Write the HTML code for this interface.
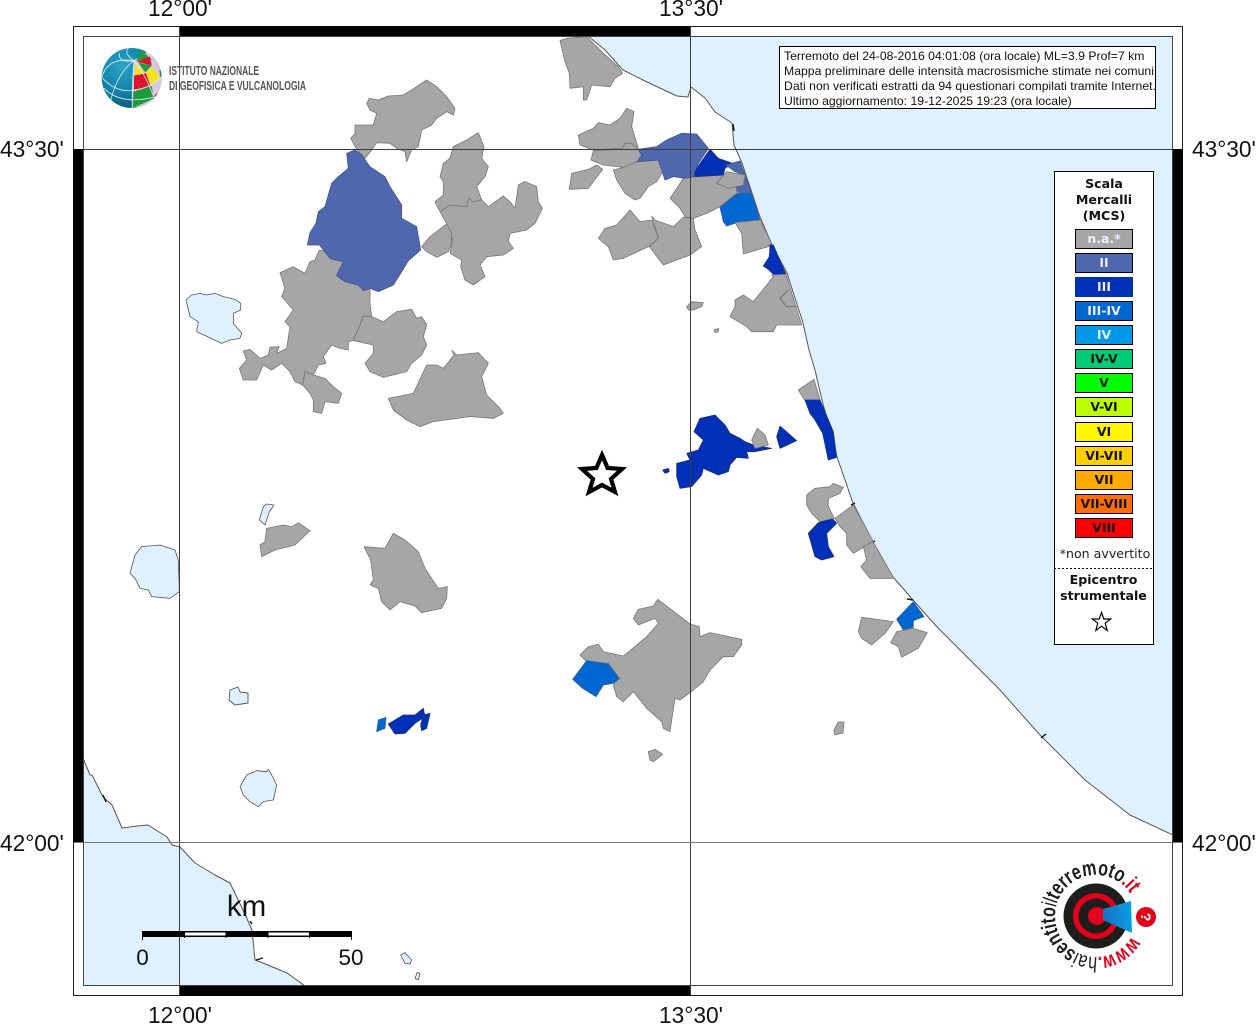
<!DOCTYPE html>
<html><head><meta charset="utf-8"><style>
html,body{margin:0;padding:0;background:#fff;width:1256px;height:1024px;overflow:hidden}
svg{display:block}
.g{filter:blur(.3px)}
.g polygon{fill:#a6a6a6;stroke:#777;stroke-width:2.4;stroke-linejoin:round}
.g polygon.b2{fill:#4f67ae;stroke:#44548a}
.g polygon.b3{fill:#0030b8;stroke:#20307a}
.g polygon.b34{fill:#0066d0;stroke:#335f9a}
.g polygon.l{fill:#dff1ff;stroke:#555}
.g polyline{fill:none;stroke:#666;stroke-width:2.4}
.lab{font-family:"Liberation Sans",sans-serif;font-size:22.7px;fill:#111}
.leg{font-family:"DejaVu Sans",sans-serif;font-size:12.6px;font-weight:bold;text-anchor:middle;fill:#111}
.sw{font-family:"DejaVu Sans",sans-serif;font-size:12.5px;font-weight:bold;text-anchor:middle;fill:#111}
.sw.w{fill:#eef}
.info{font-family:"Liberation Sans",sans-serif;font-size:12.24px;fill:#111}
</style></head><body>
<svg width="1256" height="1024" viewBox="0 0 1256 1024" xmlns="http://www.w3.org/2000/svg">
<defs>
<clipPath id="fr"><rect x="83" y="36" width="1090" height="950"/></clipPath>
<clipPath id="box"><rect x="780" y="47" width="375" height="61"/></clipPath>
<clipPath id="gl"><circle cx="215" cy="204" r="90"/></clipPath>
<radialGradient id="gt" cx=".35" cy=".3" r=".8"><stop offset="0" stop-color="#2aa4c8"/><stop offset=".6" stop-color="#0f7ca3"/><stop offset="1" stop-color="#07506c"/></radialGradient>
<linearGradient id="cone" x1="0" y1="0" x2="1" y2="0"><stop offset="0" stop-color="#1a70c0"/><stop offset="1" stop-color="#09a0e4"/></linearGradient>
<path id="arc" d="M1131.5 936.5 A41 41 0 1 1 1131.5 895.5"/>
</defs>
<rect width="1256" height="1024" fill="#fff"/>

<g clip-path="url(#fr)">
<polygon fill="#dff1ff" stroke="#555" stroke-width="1" stroke-linejoin="round" points="588,36 605,50 623,70 647,82 677,96 688,97 691,87 705,98 715,112 732,123 734,145 742,163 760,217 773,247 787,273 803,323 809,350 815,370 822,400 837,457 853,503 873,542 893,577 913,600 938,628 960,650 1000,690 1040,735 1085,780 1130,815 1173,835 1180,835 1180,30 588,30"/>
<polygon fill="#dff1ff" stroke="#555" stroke-width="1" stroke-linejoin="round" points="83,758 90,775 92,775 103,797 112,805 122,828 137,826 148,825 167,837 172,845 180,847 195,863 215,875 230,883 243,910 252,930 253,940 255,960 263,963 287,973 305,986 308,992 76,992 76,758"/>
<g stroke="#111" stroke-width="1.4" fill="none">
<line x1="733" y1="124" x2="734" y2="131"/>
<line x1="851" y1="505" x2="855" y2="503"/>
<line x1="871" y1="543" x2="875" y2="541"/>
<line x1="907" y1="599" x2="913" y2="600"/>
<line x1="1041" y1="738" x2="1046" y2="734"/>
<line x1="252" y1="924" x2="250" y2="921"/>
<line x1="256" y1="960" x2="263" y2="958"/>
<line x1="103" y1="795" x2="106" y2="802"/>
</g>
</g>

<!-- zoom5 group -->
<g class="g" transform="translate(230,70) scale(.33333)">
<polygon points="410,100 418,85 445,90 475,78 520,75 545,60 590,30 620,50 650,80 675,115 670,135 650,125 620,145 605,165 575,180 565,230 545,240 530,275 525,245 500,235 480,220 440,218 425,240 405,265 380,238 362,205 375,190 375,165 400,165 430,165 440,130 420,120"/>
<polygon points="268,540 295,545 305,568 340,575 320,617 345,635 385,645 400,662 420,655 420,700 425,740 400,738 390,765 370,812 355,815 355,840 330,835 305,825 280,860 288,880 265,885 250,915 225,905 218,945 195,935 180,905 155,880 125,900 100,885 80,930 40,930 28,895 50,870 40,843 60,838 90,865 115,855 120,832 148,830 140,850 170,835 180,770 165,755 190,720 155,680 165,655 150,608 190,590 225,610 240,575 255,570"/>
<polygon points="225,905 250,915 285,925 310,950 335,970 325,1000 285,995 275,1030 250,1025 250,990 240,970 218,945"/>
<polygon points="400,738 425,740 460,755 500,725 545,718 560,745 575,740 590,765 580,800 590,825 575,855 545,880 530,905 460,922 420,905 405,880 430,850 430,825 370,812 390,765"/>
<polygon points="475,985 550,970 590,885 620,885 640,895 672,855 665,840 680,855 745,848 775,880 755,920 770,975 810,1015 820,1030 790,1045 720,1040 610,1055 570,1070 530,1050 490,1020"/>
<polygon points="615,395 640,375 640,335 630,320 640,280 660,265 670,230 710,210 745,188 762,230 755,265 775,290 765,320 740,350 755,390 730,395 715,390 710,410 660,405 630,425"/>
<polygon points="630,425 660,405 710,410 715,385 730,395 755,390 775,410 820,378 840,395 855,415 865,345 885,335 920,350 925,395 937,415 915,460 890,480 840,490 835,515 850,535 820,555 770,560 750,585 765,620 730,645 705,630 692,590 695,570 660,550 668,510 650,460"/>
<polygon points="575,530 600,500 650,462 665,490 665,520 655,545 620,562 590,545"/>
<polygon class="b2" points="350,250 375,240 395,255 420,290 465,320 480,350 515,405 515,445 560,470 572,540 535,572 515,605 490,645 445,665 420,655 400,662 385,645 345,635 320,617 340,575 300,565 268,525 232,525 240,488 258,460 265,425 285,410 305,340 325,320 355,295"/>
</g>

<!-- zoom6 group -->
<g class="g" transform="translate(560,30) scale(.33333)">
<polygon points="0,32 20,25 80,20 105,45 130,70 175,110 188,130 165,145 150,170 95,165 80,210 70,210 70,170 30,175 28,130 15,95"/>
<polygon points="55,315 100,295 115,278 150,285 180,265 200,235 222,245 215,290 235,355 205,340 185,355 100,360 60,345"/>
<polygon points="100,362 185,358 195,340 215,340 235,360 245,375 232,395 190,412 130,405 93,390"/>
<polygon points="35,430 85,418 110,405 128,418 100,455 85,475 28,478"/>
<polygon points="160,420 190,412 232,395 295,390 308,425 290,455 265,470 240,505 225,510 195,490 170,450"/>
<polygon points="115,625 135,595 170,585 210,540 240,575 275,570 295,625 265,650 190,685 160,690 145,650"/>
<polygon points="275,558 285,570 340,590 370,562 400,565 405,600 415,625 425,650 390,675 310,705 268,650 295,625"/>
<polygon points="330,505 370,445 403,440 490,435 470,460 505,475 530,470 530,490 480,530 440,550 400,565 375,560 360,535"/>
<polygon class="b2" points="235,358 290,350 320,330 365,310 410,312 445,355 415,400 403,440 375,445 340,440 315,450 305,420 295,390 232,395 245,375"/>
<polygon class="b3" points="450,358 475,385 518,400 495,415 490,435 405,440 405,425 420,400"/>
<polygon class="b2" points="498,405 540,393 555,435 525,425"/>
<polygon class="b2" points="530,465 550,465 555,435 575,490 535,495"/>
<polygon points="470,460 500,425 555,435 550,465 505,475"/>
<polygon class="b34" points="480,532 530,492 575,490 600,570 540,575 500,588 490,575"/>
<polygon points="525,578 600,570 635,640 625,650 550,672 545,610"/>
<polygon class="b3" points="630,645 640,645 678,733 645,738 625,718 610,708 628,680"/>
<polygon points="635,735 678,733 725,885 650,885 640,905 575,905 560,890 510,860 525,830 525,810 550,795 580,815 640,740"/>
<polyline points="685,780 660,805 680,830 710,830"/>
<polygon points="380,830 395,815 430,818 425,830 400,840 385,840"/>
<polygon points="462,900 475,895 475,905 465,908"/>
</g>

<!-- zoom7 group -->
<g class="g" transform="translate(640,370) scale(.33333)">
<polygon points="475,60 522,28 540,90 495,92"/>
<polygon class="b3" points="495,90 540,90 580,185 590,262 565,270 548,190 525,150 510,130"/>
<polygon class="b3" points="162,185 180,145 225,135 255,165 270,190 300,205 315,215 340,225 395,235 345,245 320,245 325,265 290,262 270,285 265,305 235,315 190,295 185,315 155,350 120,355 110,320 110,280 150,270 140,250 175,240 190,210"/>
<polygon points="335,210 352,175 375,195 385,225 345,235"/>
<polygon class="b3" points="410,200 420,168 470,212 420,235"/>
<polygon class="b3" points="68,300 85,295 88,305 75,310"/>
<polygon points="500,375 525,355 570,350 580,340 610,352 600,370 565,385 565,410 583,445 540,455 515,430 500,405"/>
<polygon class="b3" points="535,458 578,447 590,460 560,490 565,530 582,560 545,570 525,560 505,490"/>
<polygon points="585,445 640,405 700,515 640,550 620,525 620,490 600,470"/>
<polygon points="670,530 698,515 762,625 690,625 662,590 680,570"/>
<polygon class="b34" points="770,748 820,695 852,740 820,752 820,772 790,780"/>
<polygon points="655,785 665,742 760,755 735,790 695,825 665,805"/>
<polygon points="752,818 770,785 820,775 862,788 835,835 785,862 775,830"/>
</g>

<!-- zoom8 group -->
<g class="g" transform="translate(360,520) scale(.33333)">
<polygon points="12,80 75,85 100,40 135,60 175,95 195,145 235,205 262,200 260,235 245,265 185,278 165,258 120,245 90,270 65,245 55,205 30,195 40,180 32,120"/>
<polygon points="660,405 685,380 715,373 730,395 790,408 800,400 860,350 895,310 885,295 835,315 820,295 835,268 880,258 893,238 935,270 990,312 1018,320 1020,350 1050,338 1145,358 1145,375 1120,410 1090,410 1050,450 1030,485 1000,510 960,540 945,535 935,600 930,635 910,625 905,605 860,565 820,515 790,545 770,530 760,495 778,475 745,430 680,425"/>
<polygon class="b34" points="680,422 745,432 778,475 760,490 730,495 708,530 668,505 638,478"/>
<polygon class="b3" points="85,612 130,585 165,585 190,565 195,590 165,610 135,640 105,642"/>
<polygon class="b3" points="190,585 210,580 200,625 185,632 182,615"/>
<polygon class="b34" points="55,600 78,592 75,625 50,635"/>
<polygon points="865,695 885,688 908,703 880,725 870,720"/>
</g>

<!-- zoom10 group -->
<g class="g" transform="translate(120,280) scale(.33333)">
<polygon class="l" points="198,60 215,45 240,40 260,45 285,40 310,50 345,58 362,70 362,90 340,100 340,130 365,160 360,175 330,180 305,190 230,155 235,125 210,110"/>
<polygon points="420,795 435,785 440,745 490,735 515,740 535,728 570,752 525,795 465,810 425,830"/>
<polygon class="l" points="430,680 440,672 462,675 448,695 435,735 418,720"/>
<polygon class="l" points="30,880 45,825 65,800 120,795 165,810 175,840 178,935 150,955 95,950 85,930 60,925 45,895"/>
</g>

<!-- zoom9 group -->
<g class="g" transform="translate(70,740) scale(.33333)">
<polygon class="l" points="510,140 530,105 560,92 590,95 595,88 605,105 620,135 610,180 580,185 565,200 540,185 520,165"/>
<polygon class="l" points="992,645 1005,638 1025,660 1020,672 1005,670"/>
<polygon class="l" points="1035,715 1042,697 1050,700 1045,720"/>
</g>
<g class="g">
<polygon class="l" style="stroke-width:.9" points="230,690 238,687 240,692 248,693 248,703 235,705 229,700"/>
<polygon style="stroke-width:.8" points="834,730 838,722 844,722 843,733 835,735"/>
</g>

<!-- grid -->
<g stroke="#3c3c3c" stroke-width="1" fill="none">
<line x1="179.5" y1="26" x2="179.5" y2="996"/>
<line x1="690.5" y1="26" x2="690.5" y2="996"/>
<line x1="73" y1="149.5" x2="1183" y2="149.5"/>
<line x1="73" y1="842.5" x2="1183" y2="842.5" stroke="#777"/>
</g>

<!-- frame -->
<rect x="73.5" y="26.5" width="1109" height="969" fill="none" stroke="#222"/>
<rect x="83.5" y="36.5" width="1089" height="949" fill="none" stroke="#444"/>
<rect x="180" y="26" width="510" height="10" fill="#000"/>
<rect x="180" y="986" width="510" height="10" fill="#000"/>
<rect x="73" y="149" width="10" height="693" fill="#000"/>
<rect x="1173" y="149" width="10" height="693" fill="#000"/>

<!-- labels -->
<g class="lab">
<text x="180" y="16" text-anchor="middle">12°00'</text>
<text x="691" y="16" text-anchor="middle">13°30'</text>
<text x="180" y="1023" text-anchor="middle">12°00'</text>
<text x="691" y="1023" text-anchor="middle">13°30'</text>
<text x="0" y="157">43°30'</text>
<text x="0" y="851">42°00'</text>
<text x="1192" y="157">43°30'</text>
<text x="1192" y="851">42°00'</text>
</g>

<!-- INGV logo -->
<g transform="translate(60,10) scale(.33333)">
<circle cx="215" cy="204" r="90" fill="url(#gt)"/>
<g clip-path="url(#gl)">
<polygon points="222,150 300,100 320,150 320,300 215,300" fill="#d8c8dc"/>
<polygon points="228,152 245,120 275,150" fill="#1f9a3e"/>
<polygon points="230,155 270,140 275,167" fill="#e0132e"/>
<polygon points="225,160 256,190 226,195" fill="#f5e51a"/>
<polygon points="235,158 275,167 256,187" fill="#1f9a3e"/>
<polygon points="258,190 275,170 302,205 272,224" fill="#f5e51a"/>
<polygon points="222,197 258,190 272,230 222,240" fill="#e0132e"/>
<polygon points="220,245 275,228 282,265 218,295" fill="#1f9a3e"/>
<polygon points="282,258 296,245 285,268" fill="#e0132e"/>
<polygon points="298,180 310,180 310,200 300,200" fill="#1f9a3e"/>
</g>
<g clip-path="url(#gl)" fill="none" stroke="#dff1f5" stroke-width="2.4">
<path d="M222 152 Q215 240 217 294"/>
<path d="M222 152 Q170 190 150 280"/>
<path d="M222 152 Q190 130 205 115"/>
<path d="M222 152 Q255 190 285 270"/>
<path d="M222 152 Q140 140 125 205"/>
<path d="M178 130 Q175 160 222 152"/>
<path d="M128 205 Q170 250 222 240 Q270 235 305 200"/>
<path d="M132 235 Q180 285 280 262"/>
</g>
</g>
<text x="169" y="75" font-family="'Liberation Sans',sans-serif" font-size="12.5" font-weight="bold" fill="#555" textLength="90" lengthAdjust="spacingAndGlyphs">ISTITUTO NAZIONALE</text>
<text x="169" y="90" font-family="'Liberation Sans',sans-serif" font-size="12.5" font-weight="bold" fill="#555" textLength="137" lengthAdjust="spacingAndGlyphs">DI GEOFISICA E VULCANOLOGIA</text>

<!-- info box -->
<rect x="779.5" y="46.5" width="376" height="62" fill="#fff" stroke="#000"/>
<g class="info" clip-path="url(#box)">
<text x="784" y="60">Terremoto del 24-08-2016 04:01:08 (ora locale) ML=3.9 Prof=7 km</text>
<text x="784" y="75">Mappa preliminare delle intensità macrosismiche stimate nei comuni</text>
<text x="784" y="90">Dati non verificati estratti da 94 questionari compilati tramite Internet.</text>
<text x="784" y="105">Ultimo aggiornamento: 19-12-2025 19:23 (ora locale)</text>
</g>

<!-- legend -->
<rect x="1054.5" y="171.5" width="99" height="473" fill="#fff" stroke="#000"/>
<g class="leg">
<text x="1104" y="188">Scala</text>
<text x="1104" y="204">Mercalli</text>
<text x="1104" y="220">(MCS)</text>
</g>
<g stroke="#000" stroke-width="1">
<rect x="1075.5" y="229.5" width="57" height="19" fill="#a6a6a6"/>
<rect x="1075.5" y="253.5" width="57" height="19" fill="#4f67ae"/>
<rect x="1075.5" y="277.5" width="57" height="19" fill="#0030b8" stroke="#0030b8"/>
<rect x="1075.5" y="301.5" width="57" height="19" fill="#0066d0"/>
<rect x="1075.5" y="325.5" width="57" height="19" fill="#0099e8"/>
<rect x="1075.5" y="349.5" width="57" height="19" fill="#00cc77"/>
<rect x="1075.5" y="373.5" width="57" height="19" fill="#00ff00"/>
<rect x="1075.5" y="397.5" width="57" height="19" fill="#bbff00"/>
<rect x="1075.5" y="422.5" width="57" height="19" fill="#fff600"/>
<rect x="1075.5" y="446.5" width="57" height="19" fill="#ffd000"/>
<rect x="1075.5" y="470.5" width="57" height="19" fill="#ffaa00"/>
<rect x="1075.5" y="494.5" width="57" height="19" fill="#ff6e00"/>
<rect x="1075.5" y="518.5" width="57" height="19" fill="#ff0000"/>
</g>
<text class="sw w" x="1104" y="243">n.a.*</text>
<text class="sw w" x="1104" y="267">II</text>
<text class="sw w" x="1104" y="291">III</text>
<text class="sw w" x="1104" y="315">III-IV</text>
<text class="sw w" x="1104" y="339">IV</text>
<text class="sw" x="1104" y="363">IV-V</text>
<text class="sw" x="1104" y="387">V</text>
<text class="sw" x="1104" y="411">V-VI</text>
<text class="sw" x="1104" y="436">VI</text>
<text class="sw" x="1104" y="460">VI-VII</text>
<text class="sw" x="1104" y="484">VII</text>
<text class="sw" x="1104" y="508">VII-VIII</text>
<text class="sw" x="1104" y="532">VIII</text>
<text x="1105" y="558" font-family="'DejaVu Sans',sans-serif" font-size="12.6" text-anchor="middle" fill="#222">*non avvertito</text>
<line x1="1054" y1="568.5" x2="1152" y2="568.5" stroke="#000" stroke-dasharray="2 2"/>
<g class="leg">
<text x="1103.5" y="584">Epicentro</text>
<text x="1103.5" y="600">strumentale</text>
</g>
<polygon points="1101.5,612.5 1103.8,619 1110.7,619 1105.2,623.2 1107.2,630.5 1101.5,626.2 1095.8,630.5 1097.8,623.2 1092.3,619 1099.2,619" fill="#fff" stroke="#000" stroke-width="1.2"/>

<!-- epicentre star -->
<polygon points="602,455 607.6,468 622,469 611,479 615,492 602,485 589,492 593,479 582,469 596.4,468" fill="#fff" stroke="#000" stroke-width="4.2" stroke-linejoin="miter"/>

<!-- scale -->
<rect x="142" y="931" width="210" height="6" fill="#000"/>
<rect x="184" y="932.5" width="42" height="3" fill="#fff"/>
<rect x="268" y="932.5" width="41" height="3" fill="#fff"/>
<g stroke="#000" stroke-width="1">
<line x1="142.5" y1="931" x2="142.5" y2="940"/>
<line x1="184.5" y1="931" x2="184.5" y2="938"/>
<line x1="226" y1="931" x2="226" y2="938"/>
<line x1="268" y1="931" x2="268" y2="938"/>
<line x1="309.5" y1="931" x2="309.5" y2="938"/>
<line x1="351.5" y1="931" x2="351.5" y2="940"/>
</g>
<text x="246.5" y="916" font-family="'Liberation Sans',sans-serif" font-size="29.5" text-anchor="middle" fill="#111">km</text>
<text x="142.5" y="965" font-family="'Liberation Sans',sans-serif" font-size="22.5" text-anchor="middle" fill="#111">0</text>
<text x="351" y="965" font-family="'Liberation Sans',sans-serif" font-size="22.5" text-anchor="middle" fill="#111">50</text>

<!-- hai sentito logo -->
<circle cx="1096" cy="916" r="32.5" fill="#1d1d1b"/>
<circle cx="1096" cy="916" r="23" fill="#e2001a"/>
<circle cx="1096" cy="916" r="17.5" fill="#1d1d1b"/>
<circle cx="1097" cy="916" r="9" fill="#e2001a"/>
<polygon points="1103,909 1131,901 1132,933 1103,920" fill="url(#cone)"/>
<circle cx="1146" cy="917" r="10" fill="#e2001a"/>
<text x="1146" y="922" font-family="'Liberation Sans',sans-serif" font-size="14" font-weight="bold" fill="#fff" text-anchor="middle" transform="rotate(90 1146 917)">?</text>
<text font-family="'Liberation Sans',sans-serif" font-size="21.5" font-weight="bold" fill="#1d1d1b">
<textPath href="#arc" textLength="212" lengthAdjust="spacingAndGlyphs"><tspan fill="#e2001a">www.</tspan><tspan font-weight="normal">hai</tspan>sentito<tspan font-weight="normal">il</tspan>terremoto<tspan fill="#e2001a">.it</tspan></textPath>
</text>
</svg>
</body></html>
